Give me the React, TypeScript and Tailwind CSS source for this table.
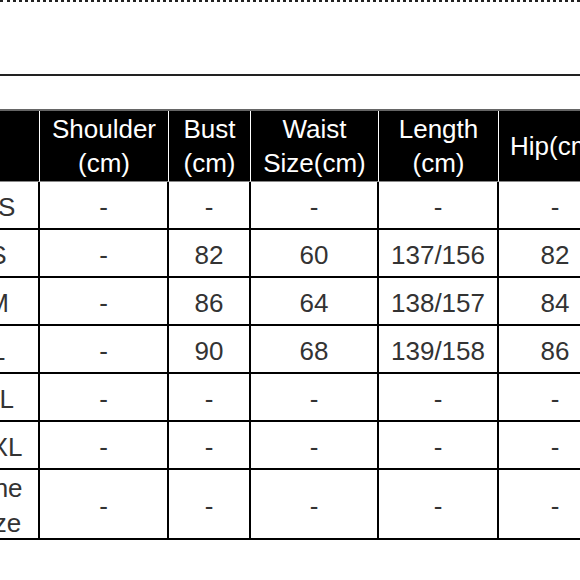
import React from "react";

const headers: React.ReactNode[] = [
  "",
  <>Shoulder<br />(cm)</>,
  <>Bust<br />(cm)</>,
  <>Waist<br />Size(cm)</>,
  <>Length<br />(cm)</>,
  "Hip(cm)",
];

const rows: string[][] = [
  ["XS", "-", "-", "-", "-", "-"],
  ["S", "-", "82", "60", "137/156", "82"],
  ["M", "-", "86", "64", "138/157", "84"],
  ["L", "-", "90", "68", "139/158", "86"],
  ["XL", "-", "-", "-", "-", "-"],
  ["XXL", "-", "-", "-", "-", "-"],
];

export default function App() {
  return (
    <div
      className="w-[580px] h-[580px] overflow-hidden bg-white"
      style={{ fontFamily: '"Liberation Sans", Arial, sans-serif' }}
    >
      <div className="-mt-px h-0 border-t-[3px] border-dotted border-[#222]" />
      <div className="mt-[72px] h-[2px] w-full bg-[#222]" />
      <div className="mt-[33px] -ml-[42px] w-max border-t-2 border-[#666]">
        <div className="grid grid-cols-[82px_129px_82px_128px_120px_114px] grid-rows-[71px_48px_48px_48px_48px_48px_48px_70px] text-[26px]">
          {headers.map((h, i) => (
            <div
              key={"h" + i}
              className="flex items-center justify-center bg-black text-white text-center leading-[34px] border-r border-b border-r-white border-b-[#888]"
            >
              <span>{h}</span>
            </div>
          ))}
          {rows.map((r, ri) =>
            r.map((c, ci) => (
              <div
                key={ri + "-" + ci}
                className="flex items-center justify-center pt-1 text-[#333] text-center leading-[34px] border-r-2 border-b-2 border-black"
              >
                {c}
              </div>
            ))
          )}
          <div className="flex items-center justify-center pt-[3px] text-[#333] text-center leading-[35px] border-r-2 border-b-2 border-black">
            <span>
              One
              <br />
              size
            </span>
          </div>
          {["-", "-", "-", "-", "-"].map((c, i) => (
            <div
              key={"last" + i}
              className="flex items-center justify-center pt-1 text-[#333] text-center leading-[34px] border-r-2 border-b-2 border-black"
            >
              {c}
            </div>
          ))}
        </div>
      </div>
    </div>
  );
}
